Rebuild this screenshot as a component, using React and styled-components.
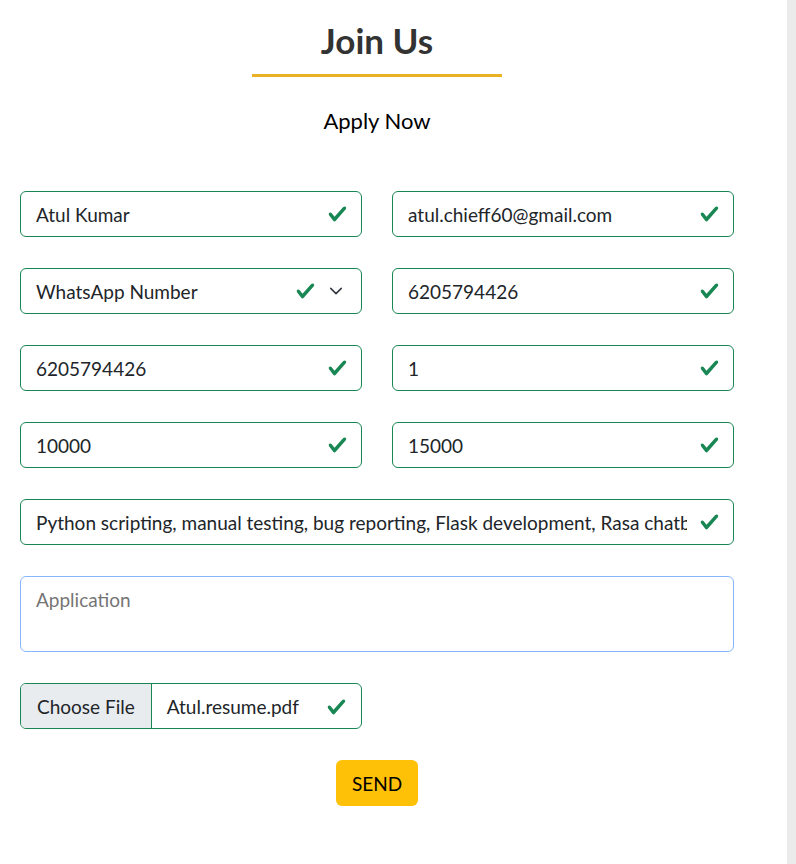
import React from 'react';
import styled, { createGlobalStyle } from 'styled-components';

const GlobalStyle = createGlobalStyle`
  * { box-sizing: border-box; }
  body {
    margin: 0;
    background: #ebebeb;
    font-family: Lato, "Noto Sans", sans-serif;
    color: #212529;
  }
`;

const Page = styled.div`
  width: 787px;
  min-height: 100vh;
  background: #fff;
`;

const Section = styled.section`
  width: 754px;
  padding: 20px 20px 40px;
  display: flex;
  flex-direction: column;
  align-items: center;
`;

const Title = styled.h2`
  margin: 0;
  font-size: 35px;
  line-height: 41px;
  font-weight: 700;
  color: #333;
`;

const Underline = styled.div`
  width: 250px;
  height: 3px;
  margin-top: 13px;
  background: #ebb124;
`;

const SubTitle = styled.p`
  margin: 30px 0 0;
  font-size: 22px;
  line-height: 28px;
  color: #000;
`;

const Form = styled.form`
  width: 100%;
  margin-top: 56px;
  display: grid;
  grid-template-columns: 342px 342px;
  column-gap: 30px;
  row-gap: 31px;
`;

const Field = styled.div`
  position: relative;
  grid-column: ${p => (p.$wide ? '1 / span 2' : 'auto')};
`;

const Input = styled.input`
  width: 100%;
  height: 46px;
  padding: 0 46px 0 15px;
  font: inherit;
  font-size: 19px;
  color: #212529;
  background: #fff;
  border: 1px solid #198754;
  border-radius: 6px;
  outline: none;
`;

const Select = styled.select`
  width: 100%;
  height: 46px;
  padding: 0 80px 0 15px;
  font: inherit;
  font-size: 19px;
  color: #212529;
  background: #fff;
  border: 1px solid #198754;
  border-radius: 6px;
  outline: none;
  appearance: none;
`;

const TextArea = styled.textarea`
  display: block;
  width: 100%;
  height: 76px;
  padding: 12px 15px;
  font: inherit;
  font-size: 19px;
  line-height: 22px;
  color: #212529;
  border: 1px solid #86b7fe;
  border-radius: 6px;
  outline: none;
  resize: none;
  &::placeholder { color: #757575; }
`;

const Check = styled.svg`
  position: absolute;
  top: 13px;
  right: ${p => p.$right || 14}px;
  width: 21px;
  height: 20px;
  pointer-events: none;
`;

const Chevron = styled.svg`
  position: absolute;
  top: 16px;
  right: 19px;
  width: 14px;
  height: 14px;
  pointer-events: none;
`;

const FileBox = styled.div`
  position: relative;
  display: flex;
  height: 46px;
  border: 1px solid #198754;
  border-radius: 6px;
  overflow: hidden;
  font-size: 19px;
`;

const FileButton = styled.span`
  display: flex;
  align-items: center;
  padding: 0 16px;
  background: #e9ecef;
  border-right: 1px solid #198754;
  color: #212529;
`;

const FileName = styled.span`
  display: flex;
  align-items: center;
  padding: 0 15px;
  color: #212529;
`;

const SendRow = styled.div`
  grid-column: 1 / span 2;
  display: flex;
  justify-content: center;
`;

const SendButton = styled.button`
  height: 46px;
  padding: 0 16px;
  font: inherit;
  font-size: 19px;
  color: #000;
  background: #ffc107;
  border: none;
  border-radius: 6px;
`;

const CheckIcon = ({ right }) => (
  <Check $right={right} viewBox="0 0 8 8">
    <path fill="#198754" d="M2.3 6.73.6 4.53c-.4-1.04.46-1.4 1.1-.8l1.1 1.4 3.4-3.8c.6-.63 1.6-.27 1.2.7l-4 4.6c-.43.5-.8.4-1.1.1z" />
  </Check>
);

const TextField = ({ value, wide }) => (
  <Field $wide={wide}>
    <Input defaultValue={value} readOnly />
    <CheckIcon />
  </Field>
);

const App = () => {
  return (
    <Page>
      <GlobalStyle />
      <Section>
        <Title>Join Us</Title>
        <Underline />
        <SubTitle>Apply Now</SubTitle>
        <Form onSubmit={e => e.preventDefault()}>
          <TextField value="Atul Kumar" />
          <TextField value="atul.chieff60@gmail.com" />

          <Field>
            <Select defaultValue="whatsapp">
              <option value="whatsapp">WhatsApp Number</option>
            </Select>
            <CheckIcon right={46} />
            <Chevron viewBox="0 0 16 16">
              <path d="m2 5 6 6 6-6" fill="none" stroke="#343a40" strokeWidth="1.8" strokeLinecap="round" strokeLinejoin="round" />
            </Chevron>
          </Field>
          <TextField value="6205794426" />

          <TextField value="6205794426" />
          <TextField value="1" />

          <TextField value="10000" />
          <TextField value="15000" />

          <TextField wide value="Python scripting, manual testing, bug reporting, Flask development, Rasa chatbot development" />

          <Field $wide>
            <TextArea placeholder="Application" />
          </Field>

          <Field>
            <FileBox>
              <FileButton>Choose File</FileButton>
              <FileName>Atul.resume.pdf</FileName>
              <CheckIcon />
            </FileBox>
          </Field>

          <SendRow>
            <SendButton type="submit">SEND</SendButton>
          </SendRow>
        </Form>
      </Section>
    </Page>
  );
};

export default App;
